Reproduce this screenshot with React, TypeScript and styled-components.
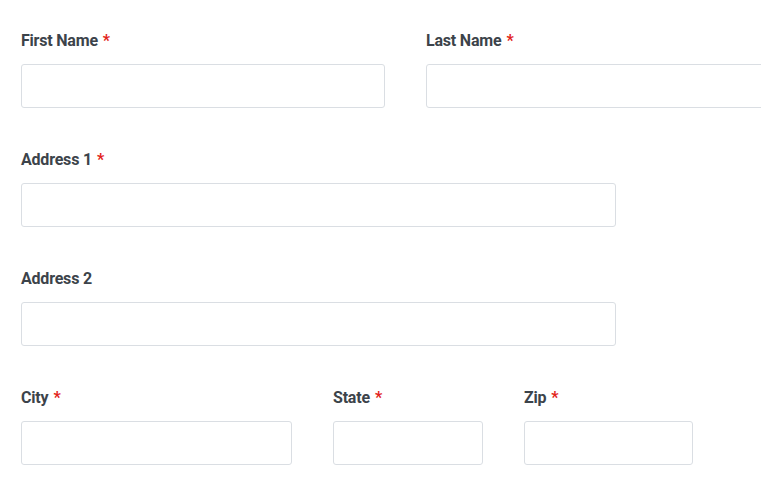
import React from 'react';
import styled, { createGlobalStyle } from 'styled-components';

const GlobalStyle = createGlobalStyle`
  html, body {
    margin: 0;
    padding: 0;
    background: #ffffff;
    overflow: hidden;
  }
  body {
    font-family: Roboto, "Liberation Sans", Arial, sans-serif;
  }
`;

const Form = styled.form`
  display: flex;
  flex-direction: column;
  gap: 42px;
  padding: 31px 0 0 21px;
  width: 800px;
  box-sizing: border-box;
`;

const Row = styled.div`
  display: flex;
  align-items: flex-start;
  gap: 41px;
`;

const Field = styled.div<{ $width: number }>`
  display: flex;
  flex-direction: column;
  gap: 13px;
  width: ${(p) => p.$width}px;
  flex: none;
`;

const Label = styled.label`
  font-size: 16px;
  line-height: 20px;
  font-weight: 700;
  color: #3c434a;
  letter-spacing: -0.2px;
`;

const Required = styled.span`
  color: #e2231a;
  margin-left: 5px;
`;

const Input = styled.input`
  height: 44px;
  width: 100%;
  box-sizing: border-box;
  border: 1px solid #dadee3;
  border-radius: 3px;
  background: #ffffff;
  padding: 0 12px;
  font: inherit;
  font-size: 15px;
  outline: none;
`;

type FieldProps = { label: string; width: number; required?: boolean };

const FormField = ({ label, width, required }: FieldProps) => (
  <Field $width={width}>
    <Label>
      {label}
      {required && <Required>*</Required>}
    </Label>
    <Input type="text" />
  </Field>
);

export default function App() {
  return (
    <>
      <GlobalStyle />
      <Form onSubmit={(e) => e.preventDefault()}>
        <Row>
          <FormField label="First Name" width={364} required />
          <FormField label="Last Name" width={364} required />
        </Row>
        <Row>
          <FormField label="Address 1" width={595} required />
        </Row>
        <Row>
          <FormField label="Address 2" width={595} />
        </Row>
        <Row>
          <FormField label="City" width={271} required />
          <FormField label="State" width={150} required />
          <FormField label="Zip" width={169} required />
        </Row>
      </Form>
    </>
  );
}
